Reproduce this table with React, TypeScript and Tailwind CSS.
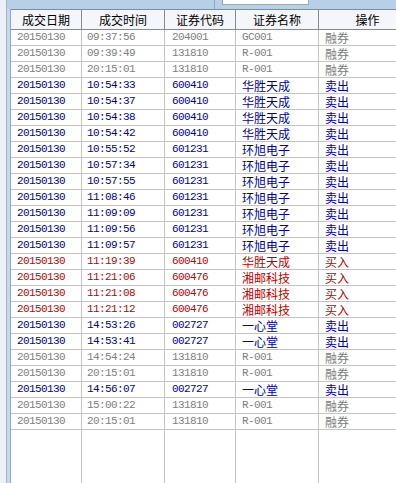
import React from "react";

type Row = [string, string, string, string, string, "g" | "b" | "r"];

const rows: Row[] = [
  ["20150130", "09:37:56", "204001", "GC001", "融券", "g"],
  ["20150130", "09:39:49", "131810", "R-001", "融券", "g"],
  ["20150130", "20:15:01", "131810", "R-001", "融券", "g"],
  ["20150130", "10:54:33", "600410", "华胜天成", "卖出", "b"],
  ["20150130", "10:54:37", "600410", "华胜天成", "卖出", "b"],
  ["20150130", "10:54:38", "600410", "华胜天成", "卖出", "b"],
  ["20150130", "10:54:42", "600410", "华胜天成", "卖出", "b"],
  ["20150130", "10:55:52", "601231", "环旭电子", "卖出", "b"],
  ["20150130", "10:57:34", "601231", "环旭电子", "卖出", "b"],
  ["20150130", "10:57:55", "601231", "环旭电子", "卖出", "b"],
  ["20150130", "11:08:46", "601231", "环旭电子", "卖出", "b"],
  ["20150130", "11:09:09", "601231", "环旭电子", "卖出", "b"],
  ["20150130", "11:09:56", "601231", "环旭电子", "卖出", "b"],
  ["20150130", "11:09:57", "601231", "环旭电子", "卖出", "b"],
  ["20150130", "11:19:39", "600410", "华胜天成", "买入", "r"],
  ["20150130", "11:21:06", "600476", "湘邮科技", "买入", "r"],
  ["20150130", "11:21:08", "600476", "湘邮科技", "买入", "r"],
  ["20150130", "11:21:12", "600476", "湘邮科技", "买入", "r"],
  ["20150130", "14:53:26", "002727", "一心堂", "卖出", "b"],
  ["20150130", "14:53:41", "002727", "一心堂", "卖出", "b"],
  ["20150130", "14:54:24", "131810", "R-001", "融券", "g"],
  ["20150130", "20:15:01", "131810", "R-001", "融券", "g"],
  ["20150130", "14:56:07", "002727", "一心堂", "卖出", "b"],
  ["20150130", "15:00:22", "131810", "R-001", "融券", "g"],
  ["20150130", "20:15:01", "131810", "R-001", "融券", "g"],
];

const colorCls = {
  g: "text-[#808080]",
  b: "text-[#00009c]",
  r: "text-[#c00000]",
};

const grid = "grid grid-cols-[71px_83px_71px_83px_98px]";
const mono = "font-['Liberation_Mono',monospace] text-[11px] tracking-[-0.6px]";
const cjk = "font-['Noto_Sans_CJK_SC',sans-serif] text-[12px]";

export default function App() {
  return (
    <div className="w-[396px] h-[483px] bg-white flex overflow-hidden">
      <div className="w-[6px] h-full bg-[#ecf1f8] shrink-0" />
      <div className="w-px h-full bg-[#a2b2c8] shrink-0" />
      <div className="flex-1 flex flex-col min-w-0">
        <div className="h-[9px] bg-[#b8cfe8] shrink-0 flex">
          <div className="ml-[207px] w-px h-full bg-[#8fa8c8]" />
          <div className="ml-[7px] w-[87px] h-[5px] bg-white border border-t-0 border-[#9aa8b8]" />
        </div>
        <div className="flex-1 flex min-h-0">
          <div className="w-[3px] bg-[#c6d7ee] shrink-0" />
          <div className="w-px bg-[#8ea9cf] shrink-0" />
          <div className="flex-1 flex flex-col overflow-hidden min-w-0">
            <div className={`${grid} h-[21px] bg-[#f3f6fa] border-t border-b border-[#8a8a8a] shrink-0 ${cjk} text-black`}>
              {["成交日期", "成交时间", "证券代码", "证券名称", "操作"].map((h) => (
                <div key={h} className="border-r border-[#8a8a8a] flex items-center justify-center leading-[19px]">
                  {h}
                </div>
              ))}
            </div>
            {rows.map((r, i) => {
              const c = colorCls[r[5]];
              const cell = "h-[16px] border-r border-b border-[#c4c4c4] leading-[15px] whitespace-nowrap overflow-hidden";
              return (
                <div key={i} className={`${grid} shrink-0 ${c}`}>
                  <div className={`${cell} pl-[6px] ${mono}`}>{r[0]}</div>
                  <div className={`${cell} pl-[5px] ${mono}`}>{r[1]}</div>
                  <div className={`${cell} pl-[7px] ${mono}`}>{r[2]}</div>
                  <div className={`${cell} pl-[6px] ${/[A-Z0-9]/.test(r[3]) ? mono : cjk}`}>{r[3]}</div>
                  <div className={`${cell} pl-[6px] ${cjk}`}>{r[4]}</div>
                </div>
              );
            })}
            <div className={`${grid} flex-1`}>
              {[0, 1, 2, 3, 4].map((k) => (
                <div key={k} className="border-r border-[#c4c4c4]" />
              ))}
            </div>
          </div>
        </div>
      </div>
    </div>
  );
}
